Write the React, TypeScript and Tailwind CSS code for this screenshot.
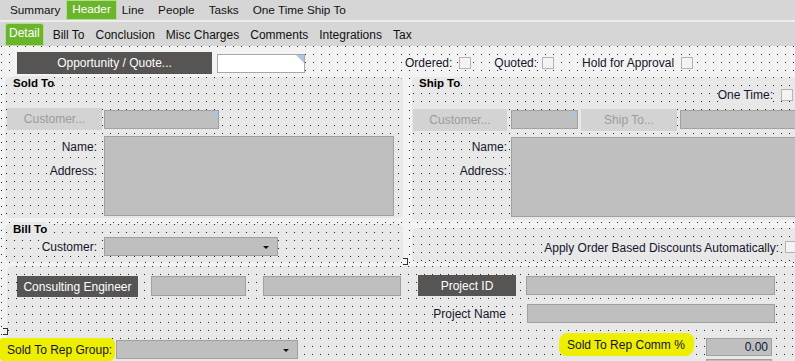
import React from 'react';

const DOTS_BODY =
  'bg-[linear-gradient(to_right,#f3f3f3_7px,transparent_7px),linear-gradient(to_bottom,#f3f3f3_7px,#222_7px)] bg-size-[8px_8px] bg-position-[2px_1px]';
const DOTS_PANEL =
  'bg-[linear-gradient(to_right,#e8e8e8_7px,transparent_7px),linear-gradient(to_bottom,#e8e8e8_7px,#222_7px)] bg-size-[8px_8px] bg-position-[2px_1px]';

function Corner() {
  return (
    <span className="absolute top-0 right-0 w-0 h-0 border-t-[8px] border-l-[8px] border-t-[#aec3de] border-l-transparent" />
  );
}

function Field({ w, h = 19, corner, white, value, className = '' }: { w: number | string; h?: number; corner?: boolean; white?: boolean; value?: string; className?: string }) {
  return (
    <div
      className={`relative shrink-0 border ${white ? 'bg-white border-[#a8a8a8]' : 'bg-[#bfbfbf] border-[#a0a0a0]'} flex items-center justify-end pr-[3px] ${className}`}
      style={{ width: w, height: h }}
    >
      {value && <span className="text-[#0a1a40]">{value}</span>}
      {corner && <Corner />}
    </div>
  );
}

function Combo({ w, className = '' }: { w: number; className?: string }) {
  return (
    <div className={`relative shrink-0 h-[19px] bg-[#bfbfbf] border border-[#a0a0a0] flex items-center justify-end pr-[8px] ${className}`} style={{ width: w }}>
      <span className="w-0 h-0 border-x-[3px] border-t-[3px] border-x-transparent border-t-[#111] mt-[1px]" />
    </div>
  );
}

function Check({ className = '' }: { className?: string }) {
  return <span className={`inline-block shrink-0 w-[12px] h-[12px] border border-[#b4b4b4] bg-[#f3f3f3] ${className}`} />;
}

function DisabledBtn({ w, label, className = '' }: { w: number; label: string; className?: string }) {
  return (
    <div className={`shrink-0 h-[22px] bg-[#d3d3d3] text-[#9c9c9c] flex items-center justify-center ${className}`} style={{ width: w }}>
      {label}
    </div>
  );
}

function DarkBtn({ w, h = 21, label, className = '' }: { w: number; h?: number; label: string; className?: string }) {
  return (
    <div className={`shrink-0 bg-[#575553] text-white flex items-center justify-center ${className}`} style={{ width: w, height: h }}>
      {label}
    </div>
  );
}

function Label({ children, className = '', bg = 'bg-[#e8e8e8]' }: { children: React.ReactNode; className?: string; bg?: string }) {
  return <span className={`inline-block shrink-0 leading-[14px] ${bg} ${className}`}>{children}</span>;
}

export default function App() {
  const topTabs = ['Summary', 'Header', 'Line', 'People', 'Tasks', 'One Time Ship To'];
  const subTabs = ['Detail', 'Bill To', 'Conclusion', 'Misc Charges', 'Comments', 'Integrations', 'Tax'];

  return (
    <div className="w-[795px] h-[361px] overflow-hidden bg-[#f3f3f3] text-[12px] text-[#15152a] flex flex-col" style={{ fontFamily: '"Liberation Sans", Arial, sans-serif' }}>
      {/* top tabs */}
      <div className="shrink-0 h-[20px] bg-[#d6d6d6] flex items-stretch pl-[3px] text-[11.75px] text-[#111]">
        {topTabs.map(t =>
          t === 'Header' ? (
            <div key={t} className="-ml-[1px] mr-[-2px] px-[5px] bg-[#6bb52c] border border-[#b6dc8f] text-white flex items-center pb-[2px]">
              {t}
            </div>
          ) : (
            <div key={t} className="px-[7px] flex items-center">{t}</div>
          )
        )}
      </div>
      <div className="shrink-0 h-[2px] bg-[#ececec]" />
      {/* sub tabs */}
      <div className="shrink-0 h-[24px] bg-[#d6d6d6] flex items-end pl-[5px] text-[12px] text-[#111]">
        {subTabs.map(t =>
          t === 'Detail' ? (
            <div key={t} className="h-[23px] px-[3px] rounded-t-[3px] bg-[#6bb52c] border border-[#b6dc8f] text-white flex items-center pb-[3px] mr-[3.5px]">
              {t}
            </div>
          ) : (
            <div key={t} className="h-[23px] px-[5.5px] flex items-center">{t}</div>
          )
        )}
      </div>

      {/* body */}
      <div className={`relative flex-1 min-h-0 overflow-hidden flex flex-col pt-[6px] ${DOTS_BODY}`}>
        {/* row A */}
        <div className="shrink-0 flex items-center h-[22px]">
          <DarkBtn w={195} h={22} label="Opportunity / Quote..." className="ml-[17px]" />
          <Field w={88} h={19} white corner className="ml-[5px]" />
          <Label bg="bg-[#f3f3f3]" className="ml-[100px]">Ordered:</Label>
          <Check className="ml-[7px]" />
          <Label bg="bg-[#f3f3f3]" className="ml-[23px]">Quoted:</Label>
          <Check className="ml-[5px]" />
          <Label bg="bg-[#f3f3f3]" className="ml-[28px]">Hold for Approval</Label>
          <Check className="ml-[7px]" />
        </div>

        {/* two columns */}
        <div className="shrink-0 flex mt-[3px]">
          <div className="shrink-0 ml-[5px] w-[398px] flex flex-col">
            {/* Sold To */}
            <div className={`shrink-0 h-[141px] rounded-[5px] ${DOTS_PANEL} flex flex-col`}>
              <Label className="ml-[8px] mt-[-1px] self-start font-bold text-[11.5px] text-black">Sold To</Label>
              <div className="flex mt-[18px]">
                <DisabledBtn w={95} label="Customer..." className="ml-[2px]" />
                <Field w={115} corner className="ml-[2px] mt-[2px]" />
              </div>
              <div className="flex mt-[6px]">
                <div className="w-[92px] flex flex-col items-end pt-[4px] gap-[10px]">
                  <Label>Name:</Label>
                  <Label>Address:</Label>
                </div>
                <Field w={290} h={80} className="ml-[7px]" />
              </div>
            </div>
            {/* Bill To */}
            <div className={`shrink-0 mt-[6px] h-[38px] rounded-[5px] ${DOTS_PANEL} flex flex-col`}>
              <Label className="ml-[8px] mt-[-2px] self-start font-bold text-[11.5px] text-black">Bill To</Label>
              <div className="flex items-center mt-[1px]">
                <div className="w-[92px] flex justify-end"><Label>Customer:</Label></div>
                <Combo w={174} className="ml-[7px]" />
              </div>
            </div>
          </div>

          <div className="ml-[9px] flex-1 min-w-0 overflow-hidden flex flex-col">
            {/* Ship To */}
            <div className={`shrink-0 h-[143px] rounded-l-[5px] ${DOTS_PANEL} flex flex-col`}>
              <Label className="ml-[7px] mt-[-1px] self-start font-bold text-[11.5px] text-black">Ship To</Label>
              <div className="flex items-center justify-end mt-[-2px] pr-[2px]">
                <Label>One Time:</Label>
                <Check className="ml-[8px]" />
              </div>
              <div className="flex mt-[7px]">
                <DisabledBtn w={94} label="Customer..." className="ml-[1px]" />
                <Field w={67} corner className="ml-[4px] mt-[1px]" />
                <DisabledBtn w={96} label="Ship To..." className="ml-[3px]" />
                <Field w={120} corner className="ml-[3px] mt-[1px]" />
              </div>
              <div className="flex mt-[6px]">
                <div className="w-[95px] shrink-0 flex flex-col items-end pt-[3px] gap-[10px]">
                  <Label>Name:</Label>
                  <Label>Address:</Label>
                </div>
                <Field w={300} h={80} className="ml-[4px]" />
              </div>
            </div>
            {/* Apply */}
            <div className={`shrink-0 mt-[8px] h-[34px] rounded-l-[5px] ${DOTS_PANEL} flex items-start justify-end pt-[13px]`}>
              <Label>Apply Order Based Discounts Automatically:</Label>
              <Check className="ml-[6px] -mr-[2px]" />
            </div>
          </div>
        </div>

        {/* bottom panel */}
        <div className={`mt-[4px] ml-[7px] flex-1 min-h-0 rounded-tl-[5px] ${DOTS_PANEL} flex flex-col`}>
          <div className="shrink-0 flex items-start mt-[9px]">
            <DarkBtn w={121} label="Consulting Engineer" className="ml-[10px] mt-[1px]" />
            <Field w={95} h={20} className="ml-[13px] mt-[1px]" />
            <Field w={138} h={20} className="ml-[17px] mt-[1px]" />
            <DarkBtn w={98} label="Project ID" className="ml-[17px]" />
            <Field w={249} h={19} className="ml-[10px] mt-[1px]" />
          </div>
          <div className="shrink-0 flex items-center mt-[7px]">
            <div className="w-[499px] flex justify-end"><Label>Project Name</Label></div>
            <Field w={248} h={19} className="ml-[21px]" />
          </div>
          <div className="shrink-0 flex items-start mt-[10px]">
            <div className="-ml-[7px] mt-[5px] h-[23px] pl-[7px] pr-[3px] bg-[#eeee00] rounded-r-[6px] rounded-l-[3px] flex items-center">
              <span>Sold To Rep Group:</span>
            </div>
            <Combo w={182} className="ml-[1px] mt-[7px]" />
            <div className="ml-[261px] h-[23px] pl-[8px] pr-[9px] bg-[#eeee00] rounded-[8px] -skew-x-3 flex items-center">
              <span className="skew-x-3">Sold To Rep Comm %</span>
            </div>
            <div className="ml-[12px] flex flex-col gap-[3px] mt-[5px]">
              <Field w={66} h={18} value="0.00" />
              <Field w={66} h={18} />
            </div>
          </div>
        </div>

        {/* layout markers */}
        <span className="absolute left-[403px] top-[212px] w-[5px] h-[7px] border-y border-r border-[#333]" />
        <span className="absolute left-[3px] top-[282px] w-[5px] h-[7px] border-y border-r border-[#333]" />
      </div>
    </div>
  );
}
